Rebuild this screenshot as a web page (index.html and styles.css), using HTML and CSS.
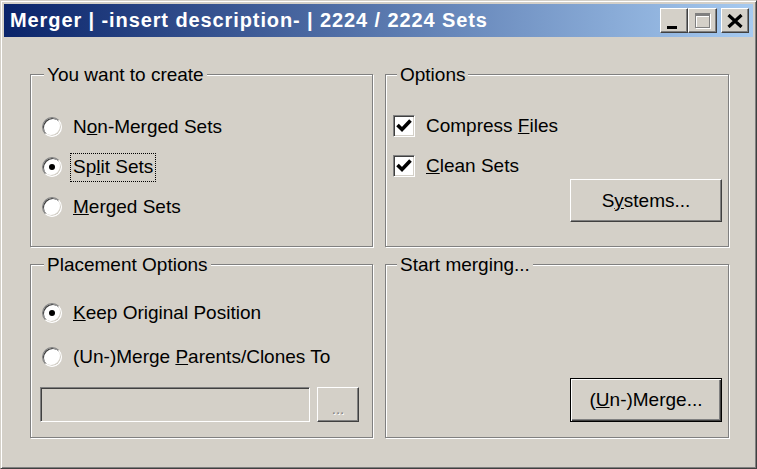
FILE: index.html
```html
<!DOCTYPE html>
<html lang="en">
<head>
    <meta charset="UTF-8">
    <title>Merger</title>
    <link rel="stylesheet" href="styles.css">
</head>
<body>

<div class="window">
    <div class="titlebar">
        <span class="title">Merger | -insert description- | 2224 / 2224 Sets</span>
        <div class="caption-buttons">
            <button class="cap-btn min"><span class="glyph-min"></span></button>
            <button class="cap-btn max" disabled><span class="glyph-max"></span></button>
            <button class="cap-btn close">
                <svg width="16" height="14" viewBox="0 0 16 14"><path d="M1.5 1 L14.5 13 M14.5 1 L1.5 13" stroke="#000" stroke-width="3.2" fill="none"/></svg>
            </button>
        </div>
    </div>

    <div class="client">
        <!-- You want to create -->
        <div class="group create">
            <span class="group-title">You want to create</span>
            <div class="option"><span class="radio"></span><span>N<u>o</u>n-Merged Sets</span></div>
            <div class="option"><span class="radio checked"></span><span class="focus">Sp<u>l</u>it Sets</span></div>
            <div class="option"><span class="radio"></span><span><u>M</u>erged Sets</span></div>
        </div>

        <!-- Options -->
        <div class="group options">
            <span class="group-title">Options</span>
            <div class="option">
                <span class="check"><svg width="20" height="20" viewBox="0 0 20 20"><path d="M3.5 9 L8 13.5 L16.5 4.5" stroke="#000" stroke-width="3.6" fill="none"/></svg></span>
                <span>Compress <u>F</u>iles</span>
            </div>
            <div class="option">
                <span class="check"><svg width="20" height="20" viewBox="0 0 20 20"><path d="M3.5 9 L8 13.5 L16.5 4.5" stroke="#000" stroke-width="3.6" fill="none"/></svg></span>
                <span><u>C</u>lean Sets</span>
            </div>
            <button class="btn systems">S<u>y</u>stems...</button>
        </div>

        <!-- Placement Options -->
        <div class="group placement">
            <span class="group-title">Placement Options</span>
            <div class="option"><span class="radio checked"></span><span><u>K</u>eep Original Position</span></div>
            <div class="option"><span class="radio"></span><span>(Un-)Merge <u>P</u>arents/Clones To</span></div>
            <div class="path-row">
                <input class="path-box" type="text" disabled>
                <button class="btn browse" disabled>...</button>
            </div>
        </div>

        <!-- Start merging -->
        <div class="group start">
            <span class="group-title">Start merging...</span>
            <button class="btn default">(<u>U</u>n-)Merge...</button>
        </div>
    </div>
</div>

</body>
</html>
```

FILE: styles.css
```css
* { box-sizing: border-box; }

body { margin: 0; background: #d4d0c8; font-family: "Liberation Sans", Arial, sans-serif; font-size: 19px; color: #000; }

/* --- Window frame --- */
.window { width: 757px; height: 469px; background: #d4d0c8; border: 1px solid; border-color: #d4d0c8 #404040 #404040 #d4d0c8; box-shadow: inset 1px 1px #fff, inset -1px -1px #808080; padding: 3px; display: flex; flex-direction: column; }

.titlebar { height: 33px; flex: none; display: flex; align-items: center; padding: 0 4px 0 6px; background: linear-gradient(90deg, #0a246a, #a6caf0); }
.title { flex: 1; color: #fff; font-weight: bold; font-size: 20px; letter-spacing: 0.9px; white-space: nowrap; }

.caption-buttons { display: flex; }
.cap-btn { width: 28px; height: 25px; padding: 0; background: #d4d0c8; border: 1px solid; border-color: #fff #404040 #404040 #fff; box-shadow: inset -1px -1px #808080; display: flex; align-items: center; justify-content: center; }
.cap-btn.max { width: 29px; }
.cap-btn.close { margin-left: 4px; }
.cap-btn.min { align-items: flex-end; justify-content: flex-start; padding: 0 0 3px 6px; }
.glyph-min { display: block; width: 10px; height: 3px; background: #000; }
.glyph-max { display: block; width: 15px; height: 15px; border: 1px solid #808080; border-top-width: 3px; box-shadow: 1px 1px #fff, inset 1px 1px #fff; }

/* --- Client area --- */
.client { flex: 1; display: grid; grid-template-columns: 343px 344px; grid-template-rows: 173px 174px; column-gap: 12px; row-gap: 17px; padding: 37px 0 0 26px; align-content: start; }

.group { position: relative; border: 1px solid #808080; box-shadow: 1px 1px #fff, inset 1px 1px #fff; display: flex; flex-direction: column; }
.group-title { position: absolute; top: -11px; left: 13px; padding: 0 3px; background: #d4d0c8; line-height: 22px; white-space: nowrap; }
.options .group-title, .start .group-title { left: 11px; }

.option { display: flex; align-items: center; height: 26px; white-space: nowrap; }
.create { padding: 39px 0 0 11px; gap: 14px; }
.options { padding: 38px 0 0 7px; gap: 14px; }
.placement { padding: 35px 0 0 11px; gap: 18px; }

.focus { outline: 1px dotted #000; padding: 2px 2px 3px; margin-left: -2px; }

/* --- Radio & checkbox --- */
.radio { flex: none; width: 20px; height: 20px; border-radius: 50%; background: #fff; border: 1px solid; border-color: #808080 #fff #fff #808080; box-shadow: inset 1px 1px #404040, inset -1px -1px #d4d0c8; margin-right: 11px; display: flex; align-items: center; justify-content: center; }
.radio.checked::after { content: ""; width: 6px; height: 6px; border-radius: 50%; background: #000; }

.check { flex: none; width: 22px; height: 22px; background: #fff; border: 1px solid; border-color: #808080 #fff #fff #808080; box-shadow: inset 1px 1px #404040, inset -1px -1px #d4d0c8; margin-right: 11px; display: flex; align-items: center; justify-content: center; }

/* --- Buttons --- */
.btn { width: 152px; height: 43px; padding: 0; font: inherit; color: #000; background: #d4d0c8; border: 1px solid; border-color: #fff #404040 #404040 #fff; box-shadow: inset -1px -1px #808080; }
.btn.default { height: 44px; border-color: #000; box-shadow: inset 1px 1px #fff, inset -1px -1px #404040, inset -2px -2px #808080; }
.systems { align-self: flex-end; margin: -14px 6px 0 0; }

.start { justify-content: flex-end; align-items: flex-end; padding: 0 6px 15px 0; }

/* --- Path row --- */
.path-row { display: flex; margin: -1px 0 0 -2px; }
.path-box { width: 270px; height: 35px; background: #d4d0c8; border: 1px solid; border-color: #808080 #fff #fff #808080; box-shadow: inset 1px 1px #404040, inset -1px -1px #d4d0c8; outline: none; }
.btn.browse { width: 42px; height: 35px; margin-left: 7px; color: #808080; text-shadow: 1px 1px #fff; font-size: 15px; padding-top: 8px; }
```
